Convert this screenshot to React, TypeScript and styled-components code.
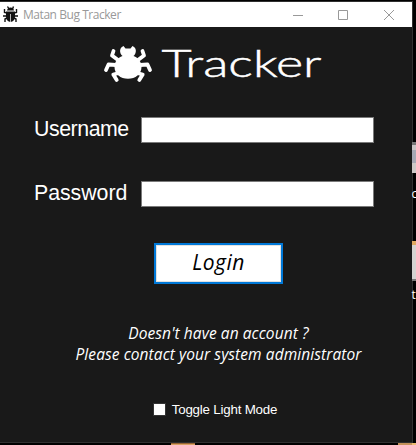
import React from "react";
import styled, { createGlobalStyle } from "styled-components";

const GlobalStyle = createGlobalStyle`
  * { box-sizing: border-box; }
  body { margin: 0; background: #000; overflow: hidden; }
`;

const Desktop = styled.div`
  display: flex;
  align-items: flex-start;
  width: 416px;
  height: 445px;
  padding-top: 1px;
  background: #000;
  overflow: hidden;
  position: relative;
`;

const Window = styled.main`
  display: flex;
  flex-direction: column;
  width: 413px;
  height: 442px;
  background: #191919;
  border: solid #303030;
  border-width: 1px 1px 1px 0;
`;

const TitleBar = styled.header`
  display: flex;
  align-items: center;
  flex: none;
  height: 25px;
  padding-left: 3px;
  background: #fff;
`;

const Title = styled.span`
  flex: 1;
  margin-left: 4px;
  color: #999;
  font: 12px/16px "Open Sans", sans-serif;
  letter-spacing: -0.45px;
  white-space: nowrap;
`;

const WindowControl = styled.button<{ $inset?: number }>`
  display: flex;
  align-items: center;
  justify-content: center;
  width: 46px;
  height: 25px;
  padding: 0 0 0 ${(p) => p.$inset ?? 0}px;
  border: 0;
  background: none;
`;

const Form = styled.form`
  display: flex;
  flex-direction: column;
  align-items: center;
  width: 412px;
`;

const Logo = styled.svg`
  display: block;
  width: 226px;
  height: 52px;
  margin: 10px 0 28px 18px;
`;

const Field = styled.label`
  display: grid;
  grid-template-columns: 107px 233px;
  align-items: center;
  width: 344px;
  height: 26px;
  margin-bottom: 38px;
  color: #fff;
  font: 21.33px/24px "Liberation Sans", Arial, sans-serif;
`;

const Caption = styled.span<{ $spacing: string }>`
  padding-bottom: 2px;
  letter-spacing: ${(p) => p.$spacing};
`;

const TextBox = styled.input`
  width: 233px;
  height: 26px;
  padding: 0 3px;
  border: 1px solid #7a7a7a;
  background: #fff;
  outline: none;
`;

const LoginButton = styled.button`
  width: 129px;
  height: 41px;
  margin: -2px 0 0 25px;
  padding: 0 0 4px;
  border: 2px solid #0078d7;
  box-shadow: inset 0 0 0 1px #e1e1e1;
  background: #fff;
  color: #000;
  font: italic 21px/28px "Open Sans", sans-serif;
  letter-spacing: 0.45px;
`;

const Hint = styled.p`
  margin: 39px 0 0 25px;
  color: #fff;
  text-align: center;
  font: italic 15.5px/21px "Open Sans", sans-serif;
  white-space: nowrap;
`;

const HintLine = styled.span`
  display: block;
  letter-spacing: 0.08px;
`;

const Toggle = styled.label`
  display: flex;
  align-items: center;
  margin: 35px 0 0 18px;
  gap: 6px;
  color: #fff;
  font: 13.33px/18px "Liberation Sans", Arial, sans-serif;
  letter-spacing: -0.2px;
  white-space: nowrap;
`;

const ToggleText = styled.span`
  padding-top: 1px;
  margin-bottom: -1px;
`;

const CheckBox = styled.input`
  appearance: none;
  width: 13px;
  height: 13px;
  margin: 0;
  border: 1px solid #333;
  background: #fff;
`;

/* Desktop shortcuts that peek out from behind the window. */
const Peek = styled.i<{ $x: number; $y: number; $w: number; $h: number; $fill: string }>`
  position: absolute;
  left: ${(p) => p.$x}px;
  top: ${(p) => p.$y}px;
  width: ${(p) => p.$w}px;
  height: ${(p) => p.$h}px;
  background: ${(p) => p.$fill};
`;

const PeekLabel = styled.span<{ $y: number }>`
  position: absolute;
  left: 411.500px;
  top: ${(p) => p.$y}px;
  color: #fff;
  font: 12px/14px "Open Sans", sans-serif;
`;

const BugIcon = styled.svg`
  width: 16px;
  height: 18px;
  margin-bottom: 1px;
`;

const TitleBug = () => (
  <BugIcon viewBox="0 0 16 18" fill="none" stroke="#111" strokeWidth="1.4">
    <path d="M4.500 1.500 6 4M10.500 1.500 9.500 4M1.500 4v3.500L4 8M13.500 4v3.500L11 8M0 11h4M11 11h4M4 13l-2 1v3M11 13l2 1v3" />
    <path d="M4 5.500Q4.500 2.500 7.500 2.500t3.500 3zM3 6.500h9V12q-.5 4.500-4.500 5Q3.500 16.500 3 12z" fill="#111" stroke="none" />
    <path d="M7.500 9v8" stroke="#ccc" strokeWidth=".9" />
  </BugIcon>
);

const BrandLogo = () => (
  <Logo viewBox="0 -6 226 52" role="img" aria-label="Tracker">
    <path
      fill="#fff"
      d="M19.500 12C17 8.500 18 4.500 21.500 3L23.500 5.500H28.500L30.500 3C34 4.500 35 8.500 32.500 12L31.500 13C36.500 15 39.500 19 39.500 24C39.500 31 33.500 35.800 26 35.800S12.500 31 12.500 24C12.500 19 15.500 15 20.500 13Z"
    />
    <path
      fill="none"
      stroke="#fff"
      strokeWidth="3.800"
      strokeLinecap="round"
      strokeLinejoin="round"
      d="M16 17 10 12.500 11.500 8M36 17 42 12.500 40.500 8M14 22 6.500 21.500 4 27M38 22 45.500 21.500 48 27M17 30 11.300 31.500 14.700 37M35 30 40.700 31.500 37.300 37"
    />
    <text
      x="59.500"
      y="33.500"
      fill="#fff"
      stroke="#fff"
      strokeWidth=".5"
      fontFamily="Lato, sans-serif"
      fontWeight="300"
      fontSize="38"
      textLength="160"
      lengthAdjust="spacingAndGlyphs"
    >
      Tracker
    </text>
  </Logo>
);

export default function App() {
  return (
    <Desktop>
      <GlobalStyle />
      <Window>
        <TitleBar>
          <TitleBug />
          <Title>Matan Bug Tracker</Title>
          <WindowControl type="button" aria-label="Minimize" $inset={2}>
            <svg width="10" height="10"><path d="M0 5.500h10" stroke="#999" /></svg>
          </WindowControl>
          <WindowControl type="button" aria-label="Maximize">
            <svg width="10" height="10"><path d="M.5.5h9v9h-9z" fill="none" stroke="#999" /></svg>
          </WindowControl>
          <WindowControl type="button" aria-label="Close">
            <svg width="10" height="10"><path d="m0 0 10 10M10 0 0 10" stroke="#999" /></svg>
          </WindowControl>
        </TitleBar>
        <Form onSubmit={(e) => e.preventDefault()}>
          <BrandLogo />
          <Field>
            <Caption $spacing="-0.45px">Username</Caption>
            <TextBox type="text" />
          </Field>
          <Field>
            <Caption $spacing="-0.05px">Password</Caption>
            <TextBox type="password" />
          </Field>
          <LoginButton type="submit">Login</LoginButton>
          <Hint>
            <HintLine>Doesn't have an account ?</HintLine>
            <HintLine>Please contact your system administrator</HintLine>
          </Hint>
          <Toggle>
            <CheckBox type="checkbox" />
            <ToggleText>Toggle Light Mode</ToggleText>
          </Toggle>
        </Form>
      </Window>
      <Peek $x={412} $y={142} $w={4} $h={31} $fill="linear-gradient(#777 0 3px, #c8c4c4 3px 8px, #a5a8b5 8px 21px, #ccc8c7 21px)" />
      <PeekLabel $y={187}>c</PeekLabel>
      <Peek $x={412} $y={241} $w={4} $h={40} $fill="linear-gradient(#e0aa62 0 4px, #d5d3d1 4px 38px, #777 38px)" />
      <PeekLabel $y={288}>t</PeekLabel>
      <Peek $x={171} $y={443} $w={24} $h={2} $fill="linear-gradient(#9a6534 50%, #d6a163 50%)" />
      <Peek $x={398} $y={443} $w={18} $h={2} $fill="linear-gradient(90deg, #c4925a 14px, #edbc73 14px)" />
    </Desktop>
  );
}
